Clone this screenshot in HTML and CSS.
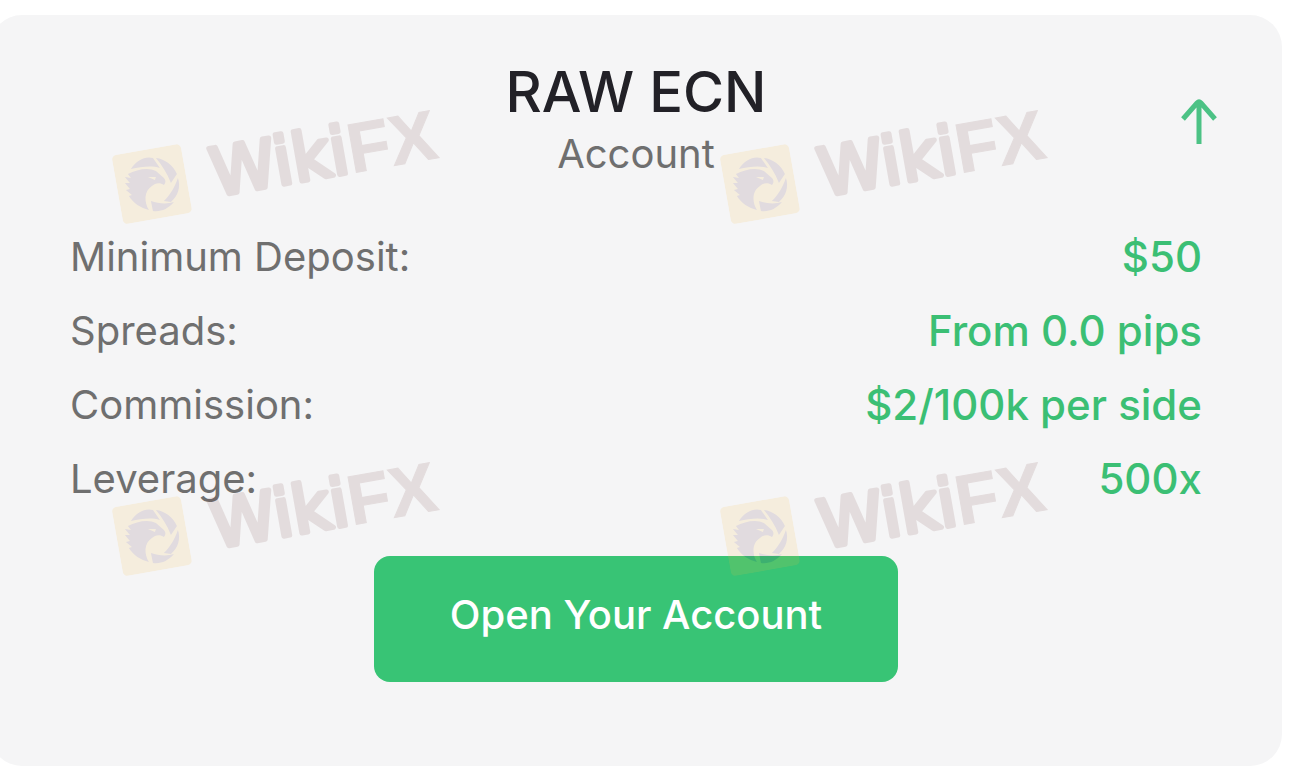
FILE: index.html
```html
<!DOCTYPE html>
<html lang="en">
<head>
  <meta charset="UTF-8" />
  <meta name="viewport" content="width=device-width, initial-scale=1.0"/>
  <title>RAW ECN Account</title>
  <link rel="stylesheet" href="styles.css">
</head>
<body>
  <!-- eagle and shutter logo, shared by the watermarks -->
  <svg class="defs" width="0" height="0" aria-hidden="true">
    <symbol id="eagle" viewBox="0 0 70 70">
      <rect class="tile" width="70" height="70" rx="5"/>
      <g class="bird" transform="rotate(10 35 35)">
        <path d="M14 20C20 11 28 7 36 9L43 19C34 16 24 18 14 20Z"/>
        <path d="M39 9C48 10 56 16 60 25L54 34C50 24 45 16 39 9Z"/>
        <path d="M61 29C64 38 61 47 54 53L47 52C53 46 58 38 61 29Z"/>
        <path d="M34 52C42 55 51 55 57 53C51 60 44 63 36 62Z"/>
        <path d="M11 25C20 20 32 18 39 22L47 29C49 31 49 34 47 36C43 33 38 34 35 37C27 42 27 53 32 61C24 59 16 54 12 47L15 46L9 41L13 40L8 34L13 34L8 28L14 29ZM31 28L38 31L39 28Z" fill-rule="evenodd"/>
      </g>
    </symbol>
  </svg>

  <main class="card">
    <header class="card-header">
      <h1>RAW ECN</h1>
      <p class="subtitle">Account</p>
      <button class="toggle-btn" type="button" aria-label="Collapse">
        <svg width="40" height="48" viewBox="0 0 40 48" aria-hidden="true">
          <path d="M20 45V3M4 20L18 4Q20 2 22 4L36 20"/>
        </svg>
      </button>
    </header>

    <dl class="details">
      <div class="row"><dt>Minimum Deposit:</dt><dd>$50</dd></div>
      <div class="row"><dt>Spreads:</dt><dd>From 0.0 pips</dd></div>
      <div class="row"><dt>Commission:</dt><dd>$2/100k per side</dd></div>
      <div class="row"><dt>Leverage:</dt><dd>500x</dd></div>
    </dl>

    <button class="open-btn" type="button">Open Your Account</button>

    <div class="watermarks">
      <svg class="mark" viewBox="0 0 324 70"><use href="#eagle" width="70" height="70"/><text class="wiki" x="95" y="58">Wiki</text><text class="fx" x="323" y="59">FX</text></svg>
      <svg class="mark" viewBox="0 0 324 70"><use href="#eagle" width="70" height="70"/><text class="wiki" x="95" y="58">Wiki</text><text class="fx" x="323" y="59">FX</text></svg>
      <svg class="mark" viewBox="0 0 324 70"><use href="#eagle" width="70" height="70"/><text class="wiki" x="95" y="58">Wiki</text><text class="fx" x="323" y="59">FX</text></svg>
      <svg class="mark" viewBox="0 0 324 70"><use href="#eagle" width="70" height="70"/><text class="wiki" x="95" y="58">Wiki</text><text class="fx" x="323" y="59">FX</text></svg>
    </div>
  </main>
</body>
</html>
```
FILE: styles.css
```css
* {
  box-sizing: border-box;
}
body {
  margin: 0;
  background: #fff;
  font-family: Inter, 'Liberation Sans', sans-serif;
  color: #6f6f6f;
  overflow-x: hidden;
}
.defs {
  position: absolute;
}
.card {
  position: relative;
  margin: 15px 18px 10px -10px;
  padding: 43px 80px 84px;
  background: #f5f5f6;
  border-radius: 32px;
  display: flex;
  flex-direction: column;
  overflow: hidden;
}
.card-header {
  position: relative;
  text-align: center;
}
h1 {
  margin: 0;
  font-size: 56px;
  line-height: 68px;
  font-weight: 500;
  color: #222127;
}
.subtitle {
  margin: 0;
  font-size: 40px;
  line-height: 56px;
}
/* sits over the right end of the centered title */
.toggle-btn {
  position: absolute;
  right: -17px;
  top: 41px;
  padding: 0;
  border: none;
  background: none;
  cursor: pointer;
}
.toggle-btn svg {
  display: block;
  fill: none;
  stroke: #4cc285;
  stroke-width: 5;
}
.details {
  margin: 38px 0 0;
}
.row {
  display: flex;
  justify-content: space-between;
  font-size: 40px;
  line-height: 74px;
}
.row dd {
  margin: 0;
  font-size: 42px;
  font-weight: 500;
  color: #3bbf74;
}
.open-btn {
  align-self: center;
  margin-top: 40px;
  padding: 34px 76px 42px;
  border: none;
  border-radius: 16px;
  background: #38c475;
  color: #fff;
  font-family: inherit;
  font-size: 40px;
  line-height: 50px;
  font-weight: 500;
  cursor: pointer;
}
.watermarks {
  position: absolute;
  left: 125px;
  top: 112px;
  display: grid;
  grid-template-columns: 324px 324px;
  gap: 282px 284px;
  pointer-events: none;
}
.mark {
  width: 324px;
  height: 70px;
  overflow: visible;
  transform: rotate(-10deg);
  opacity: 0.13;
}
.wiki {
  font-family: 'DejaVu Sans', sans-serif;
  font-size: 66px;
  fill: #723c3c;
  stroke: #723c3c;
  stroke-width: 5;
  stroke-linejoin: round;
}
.fx {
  font-family: 'Liberation Sans', sans-serif;
  font-size: 70px;
  font-weight: 700;
  text-anchor: end;
  fill: #723c3c;
  stroke: #723c3c;
  stroke-width: 1;
}
.tile {
  fill: #fabe3c;
}
.bird {
  fill: #5f3250;
}
```
